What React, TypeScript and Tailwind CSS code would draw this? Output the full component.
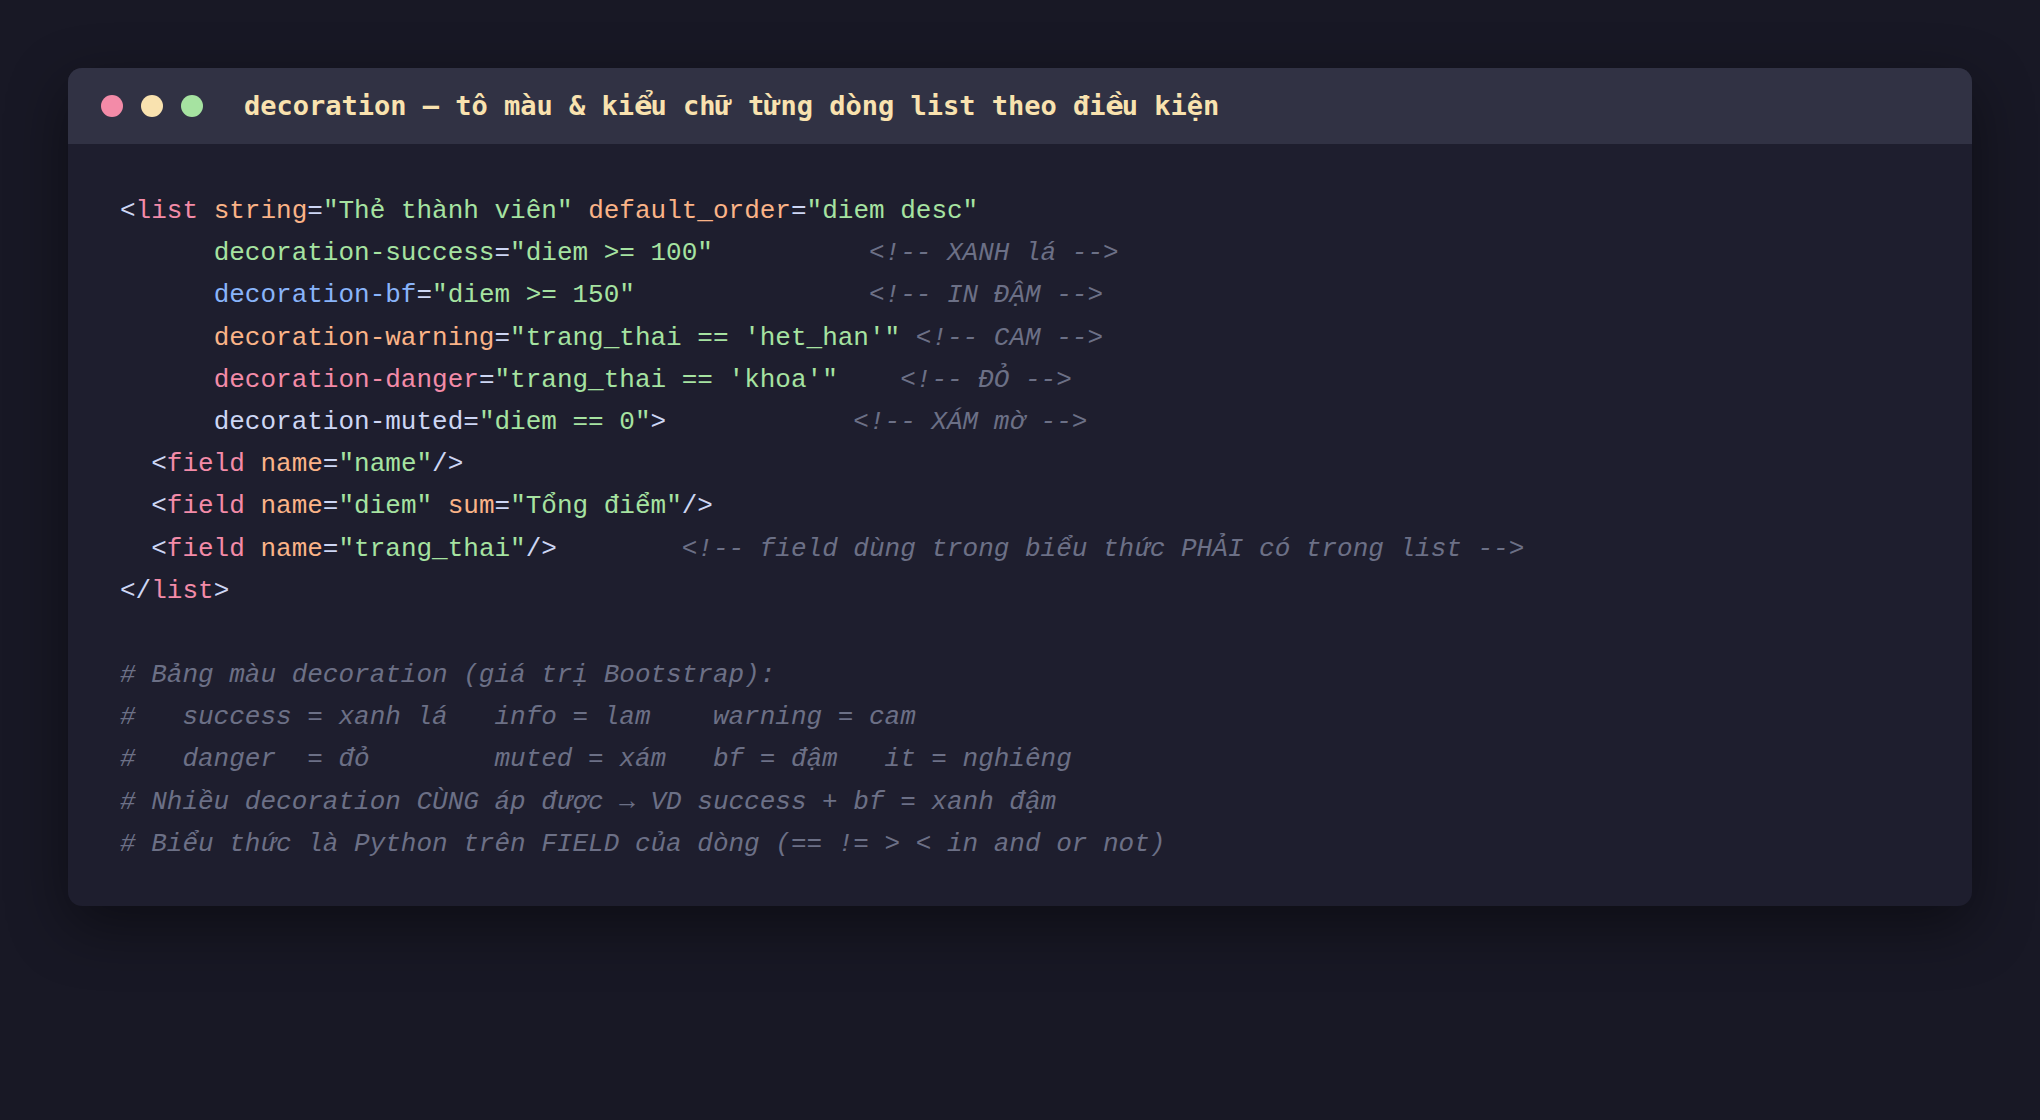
import React from "react";

type Tok = [string, string];

const P = "text-[#cdd6f4]"; // punctuation / plain
const T = "text-[#f38ba8]"; // tag
const A = "text-[#fab387]"; // attribute
const S = "text-[#a6e3a1]"; // string
const B = "text-[#89b4fa]"; // blue attr
const C = "text-[#6c7086] italic"; // comment

const lines: Tok[][] = [
  [[P, "<"], [T, "list"], [P, " "], [A, "string"], [P, "="], [S, '"Thẻ thành viên"'], [P, " "], [A, "default_order"], [P, "="], [S, '"diem desc"']],
  [[P, "      "], [S, "decoration-success"], [P, "="], [S, '"diem >= 100"'], [P, "          "], [C, "<!-- XANH lá -->"]],
  [[P, "      "], [B, "decoration-bf"], [P, "="], [S, '"diem >= 150"'], [P, "               "], [C, "<!-- IN ĐẬM -->"]],
  [[P, "      "], [A, "decoration-warning"], [P, "="], [S, "\"trang_thai == 'het_han'\""], [P, " "], [C, "<!-- CAM -->"]],
  [[P, "      "], [T, "decoration-danger"], [P, "="], [S, "\"trang_thai == 'khoa'\""], [P, "    "], [C, "<!-- ĐỎ -->"]],
  [[P, "      "], [P, "decoration-muted"], [P, "="], [S, '"diem == 0"'], [P, ">            "], [C, "<!-- XÁM mờ -->"]],
  [[P, "  <"], [T, "field"], [P, " "], [A, "name"], [P, "="], [S, '"name"'], [P, "/>"]],
  [[P, "  <"], [T, "field"], [P, " "], [A, "name"], [P, "="], [S, '"diem"'], [P, " "], [A, "sum"], [P, "="], [S, '"Tổng điểm"'], [P, "/>"]],
  [[P, "  <"], [T, "field"], [P, " "], [A, "name"], [P, "="], [S, '"trang_thai"'], [P, "/>        "], [C, "<!-- field dùng trong biểu thức PHẢI có trong list -->"]],
  [[P, "</"], [T, "list"], [P, ">"]],
  [[P, " "]],
  [[C, "# Bảng màu decoration (giá trị Bootstrap):"]],
  [[C, "#   success = xanh lá   info = lam    warning = cam"]],
  [[C, "#   danger  = đỏ        muted = xám   bf = đậm   it = nghiêng"]],
  [[C, "# Nhiều decoration CÙNG áp được → VD success + bf = xanh đậm"]],
  [[C, "# Biểu thức là Python trên FIELD của dòng (== != > < in and or not)"]],
];

function Vn({ ch }: { ch: string }) {
  return (
    <span
      className="inline-block w-[16.25px] text-center"
      style={{ fontFamily: '"DejaVu Sans", sans-serif' }}
    >
      {ch}
    </span>
  );
}

export default function App() {
  return (
    <div className="min-h-screen bg-[#181825] px-[68px] pt-[68px] pb-[68px]">
      <div className="rounded-[14px] bg-[#1e1e2e] overflow-hidden shadow-[0_20px_60px_rgba(0,0,0,0.45)]">
        <div className="h-[76px] bg-[#313244] flex items-center pl-[33px]">
          <div className="flex items-center gap-[18px]">
            <span className="w-[22px] h-[22px] rounded-full bg-[#f38ba8]" />
            <span className="w-[22px] h-[22px] rounded-full bg-[#f9e2af]" />
            <span className="w-[22px] h-[22px] rounded-full bg-[#a6e3a1]" />
          </div>
          <div
            className="ml-[41px] text-[27px] font-bold text-[#f9e2af] whitespace-pre"
            style={{ fontFamily: '"DejaVu Sans Mono", monospace' }}
          >
            {"decoration — tô màu & ki"}
            <Vn ch="ể" />
            {"u chữ từng dòng list theo đi"}
            <Vn ch="ề" />
            {"u kiện"}
          </div>
        </div>
        <div
          className="px-[52px] pt-[46px] pb-[41px] text-[26px] leading-[42.2px] whitespace-pre"
          style={{ fontFamily: '"Liberation Mono", "DejaVu Sans Mono", monospace' }}
        >
          {lines.map((ln, i) => (
            <div key={i} className="h-[42.2px]">
              {ln.map(([cls, txt], j) => (
                <span key={j} className={cls}>
                  {txt}
                </span>
              ))}
            </div>
          ))}
        </div>
      </div>
    </div>
  );
}
